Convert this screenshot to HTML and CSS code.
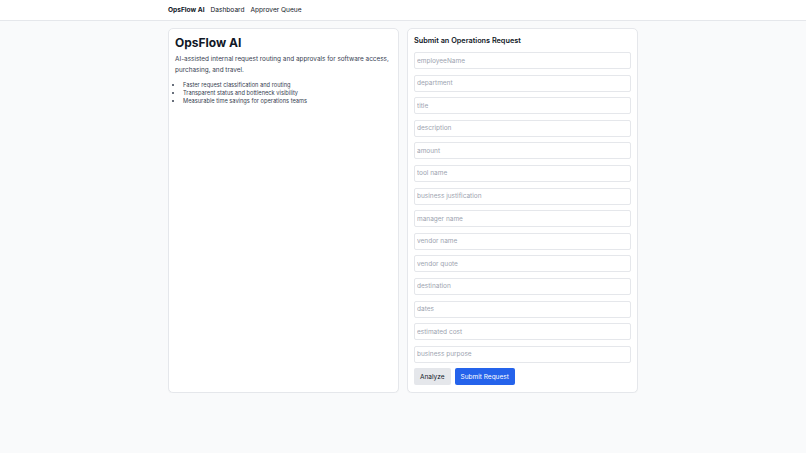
FILE: index.html
```html
<!DOCTYPE html>
<html lang="en">
<head>
    <meta charset="UTF-8">
    <meta name="viewport" content="width=device-width, initial-scale=1.0">
    <title>OpsFlow AI</title>
    <link rel="stylesheet" href="styles.css">
</head>
<body>
    <nav class="topbar">
        <div class="topbar-inner">
            <span class="brand">OpsFlow AI</span>
            <a href="#">Dashboard</a>
            <a href="#">Approver Queue</a>
        </div>
    </nav>

    <main class="container">
        <section class="card intro">
            <h1>OpsFlow AI</h1>
            <p>AI-assisted internal request routing and approvals for software access, purchasing, and travel.</p>
            <ul>
                <li>Faster request classification and routing</li>
                <li>Transparent status and bottleneck visibility</li>
                <li>Measurable time savings for operations teams</li>
            </ul>
        </section>

        <section class="card">
            <h2>Submit an Operations Request</h2>
            <form class="request-form">
                <input type="text" placeholder="employeeName">
                <input type="text" placeholder="department">
                <input type="text" placeholder="title">
                <input type="text" placeholder="description">
                <input type="text" placeholder="amount">
                <input type="text" placeholder="tool name">
                <input type="text" placeholder="business justification">
                <input type="text" placeholder="manager name">
                <input type="text" placeholder="vendor name">
                <input type="text" placeholder="vendor quote">
                <input type="text" placeholder="destination">
                <input type="text" placeholder="dates">
                <input type="text" placeholder="estimated cost">
                <input type="text" placeholder="business purpose">
                <div class="actions">
                    <button type="button" class="btn-secondary">Analyze</button>
                    <button type="submit" class="btn-primary">Submit Request</button>
                </div>
            </form>
        </section>
    </main>
</body>
</html>
```

FILE: styles.css
```css
body {
    margin: 0;
    font-family: Inter, "Noto Sans", Arial, sans-serif;
    background-color: #f9fafb;
    color: #111827;
}

.topbar {
    background: #fff;
    border-bottom: 1px solid #e5e7eb;
}

.topbar-inner {
    width: 470px;
    margin: 0 auto;
    height: 20px;
    display: flex;
    align-items: center;
    gap: 6px;
    font-size: 6.6px;
}

.brand {
    font-weight: 700;
}

.topbar a {
    color: #111827;
    text-decoration: none;
}

.container {
    width: 470px;
    margin: 7px auto 0;
    display: grid;
    grid-template-columns: 1fr 1fr;
    gap: 8px;
    align-items: stretch;
}

.card {
    background: #fff;
    border: 1px solid #e5e7eb;
    border-radius: 5px;
    padding: 5px 6px 7px;
    box-shadow: 0 1px 1px rgba(0, 0, 0, 0.03);
}

.intro h1 {
    margin: 0 0 2px;
    font-size: 12px;
    font-weight: 700;
    line-height: 18px;
}

.intro p {
    margin: 0 0 5px;
    font-size: 6.4px;
    line-height: 11px;
    color: #374151;
}

.intro ul {
    margin: 0;
    padding-left: 8px;
    font-size: 5.7px;
    line-height: 8px;
    color: #374151;
}

.card h2 {
    margin: 1px 0 6px;
    font-size: 7.3px;
    font-weight: 600;
    line-height: 11px;
}

.request-form {
    display: flex;
    flex-direction: column;
    gap: 5.6px;
}

.request-form input {
    height: 17px;
    box-sizing: border-box;
    padding: 0 2px;
    border: 1px solid #e5e7eb;
    border-radius: 2px;
    font-family: inherit;
    font-size: 6.5px;
    color: #111827;
}

.request-form input::placeholder {
    color: #9ca3af;
}

.actions {
    display: flex;
    gap: 4px;
}

.actions button {
    height: 17px;
    padding: 0 6px;
    border: none;
    border-radius: 2px;
    font-family: inherit;
    font-size: 6.5px;
}

.btn-secondary {
    background: #e5e7eb;
    color: #111827;
}

.btn-primary {
    background: #2563eb;
    color: #fff;
}
```
